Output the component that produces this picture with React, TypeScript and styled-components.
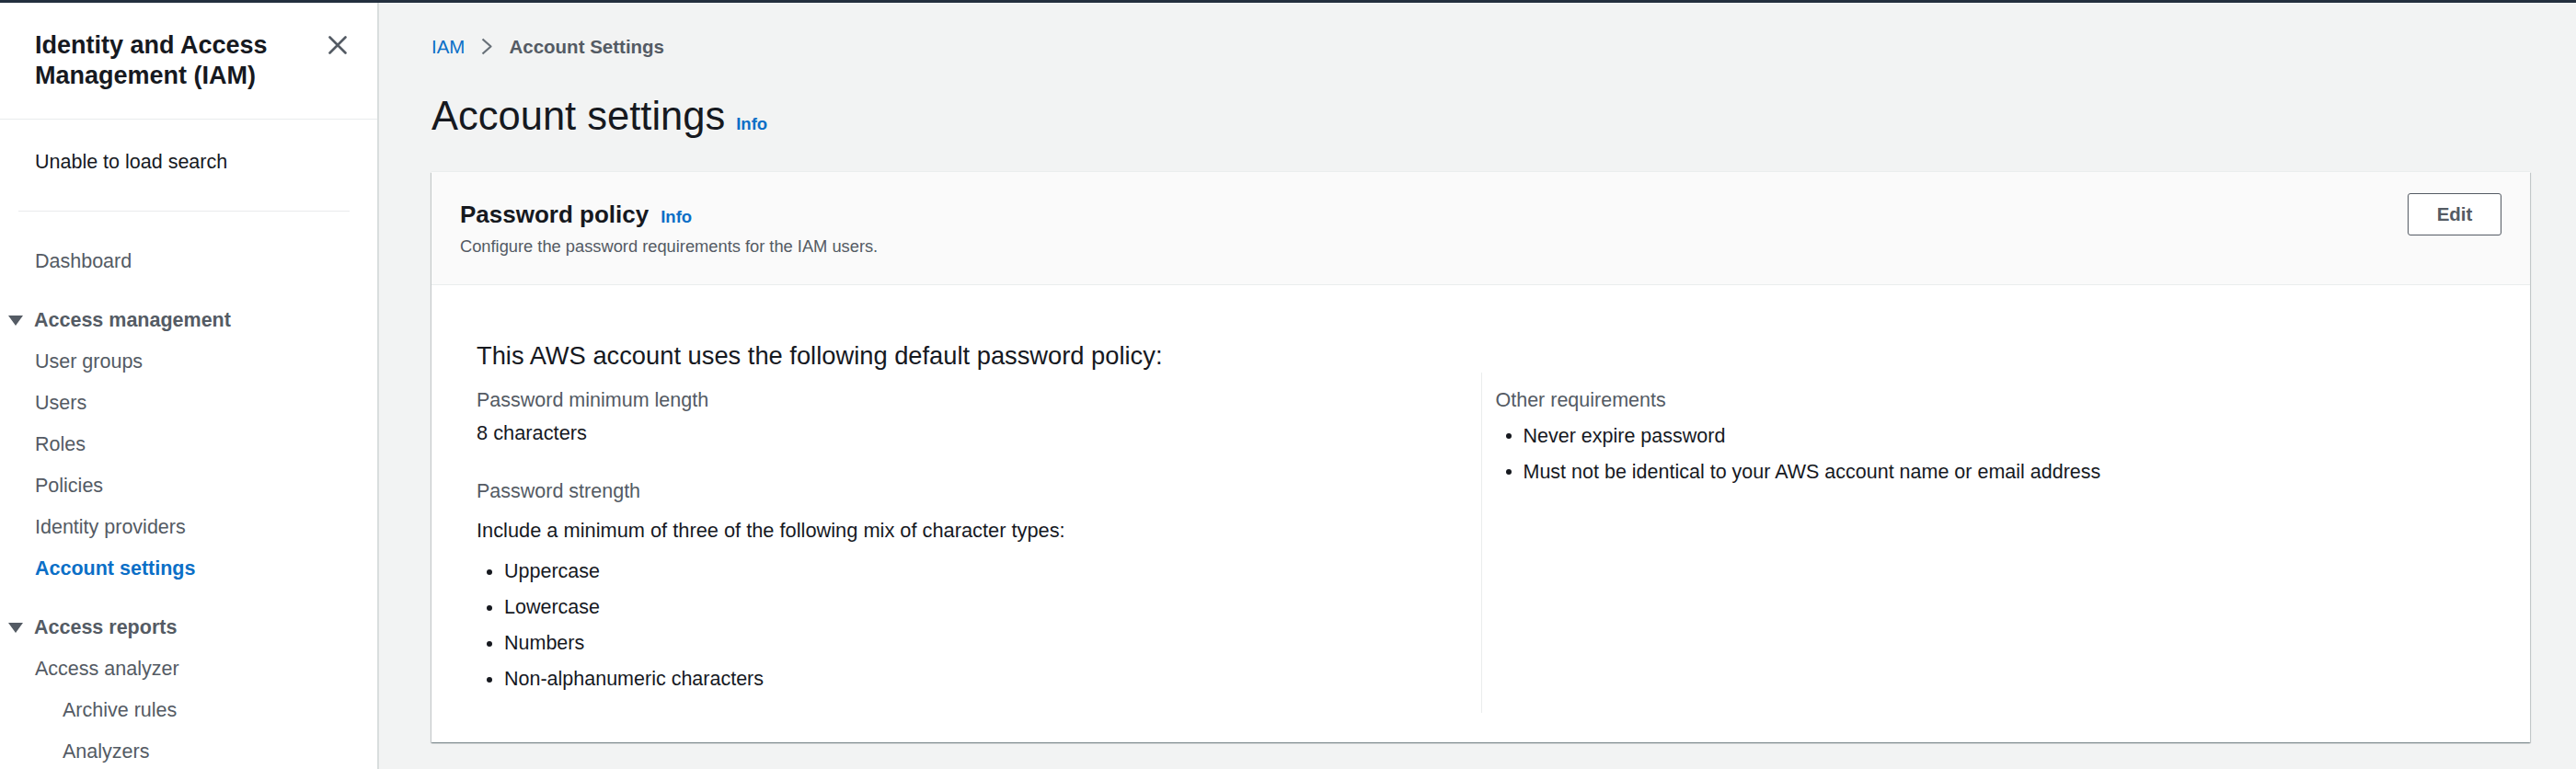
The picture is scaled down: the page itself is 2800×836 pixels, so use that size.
import React from 'react';
import styled, { createGlobalStyle } from 'styled-components';

const BLUE = '#0b6fc7';

const GlobalStyle = createGlobalStyle`
  html, body {
    margin: 0;
    padding: 0;
    background: #f2f3f3;
  }
  body {
    font-family: "Liberation Sans", Arial, sans-serif;
    color: #16191f;
  }
  * {
    box-sizing: border-box;
  }
`;

const TopBar = styled.div`
  height: 3px;
  background: #232f3e;
`;

const Shell = styled.div`
  display: flex;
  height: 833px;
`;

/* ---------- side navigation ---------- */

const Sidebar = styled.nav`
  width: 412px;
  flex: none;
  background: #fff;
  border-right: 2px solid #d9dede;
  overflow: hidden;
`;

const SideHeader = styled.div`
  display: flex;
  justify-content: space-between;
  align-items: flex-start;
  padding: 30px 33px 30px 38px;
  border-bottom: 1px solid #e9ebed;
`;

const SideTitle = styled.h2`
  margin: 0;
  max-width: 290px;
  font-size: 27px;
  line-height: 33px;
  font-weight: 700;
  color: #16191f;
`;

const CloseButton = styled.button`
  display: flex;
  padding: 0;
  margin-top: 6px;
  border: 0;
  background: none;
  color: #545b64;
  cursor: pointer;
`;

const SearchNote = styled.div`
  padding: 30px 0 37px 38px;
  font-size: 21.5px;
  line-height: 32px;
  color: #16191f;
`;

const SideDivider = styled.div`
  height: 1px;
  margin: 0 30px 0 20px;
  background: #e9ebed;
`;

const NavList = styled.ul`
  list-style: none;
  margin: 0;
  padding: 31.5px 0 0 0;
`;

const NavLink = styled.li<{ $active?: boolean; $nested?: boolean }>`
  padding-left: ${p => (p.$nested ? 68 : 38)}px;
  font-size: 21.5px;
  line-height: 45px;
  white-space: nowrap;
  color: ${p => (p.$active ? BLUE : '#545b64')};
  font-weight: ${p => (p.$active ? 700 : 400)};
`;

const SectionHeader = styled.li`
  display: flex;
  align-items: center;
  gap: 12px;
  margin-top: 19px;
  padding-left: 9px;
  font-size: 21.5px;
  line-height: 45px;
  font-weight: 700;
  color: #545b64;
`;

/* ---------- main content ---------- */

const Main = styled.main`
  flex: 1;
  min-width: 0;
  padding: 31.6px 50px 0 57px;
`;

const Breadcrumbs = styled.div`
  display: flex;
  align-items: center;
  gap: 18px;
  font-size: 20.5px;
  line-height: 32px;
`;

const Crumb = styled.span<{ $current?: boolean }>`
  color: ${p => (p.$current ? '#545b64' : BLUE)};
  font-weight: ${p => (p.$current ? 700 : 400)};
`;

const PageTitle = styled.div`
  display: flex;
  align-items: baseline;
  gap: 12px;
  margin-top: 34.5px;
`;

const H1 = styled.h1`
  margin: 0;
  font-size: 43.5px;
  line-height: 50px;
  font-weight: 400;
  color: #16191f;
`;

const InfoLink = styled.a`
  font-size: 18.5px;
  font-weight: 700;
  color: ${BLUE};
  text-decoration: none;
`;

const Card = styled.section`
  margin-top: 36px;
  background: #fff;
  box-shadow: 0 1px 1px 0 rgba(0, 28, 36, 0.3), 1px 1px 1px 0 rgba(0, 28, 36, 0.15),
    -1px 1px 1px 0 rgba(0, 28, 36, 0.15), 0 -1px 0 0 #eaeded;
`;

const CardHeader = styled.header`
  display: flex;
  justify-content: space-between;
  align-items: flex-start;
  padding: 23px 31px 28px 31px;
  background: #fafafa;
  border-bottom: 1px solid #eaeded;
`;

const HeaderText = styled.div`
  margin-top: 4.6px;
`;

const TitleRow = styled.div`
  display: flex;
  align-items: baseline;
  gap: 13px;
`;

const CardTitle = styled.h2`
  margin: 0;
  font-size: 26px;
  line-height: 36px;
  font-weight: 700;
  color: #16191f;
`;

const CardDescription = styled.p`
  margin: 4px 0 0;
  font-size: 18.3px;
  line-height: 26px;
  color: #545b64;
`;

const Button = styled.button`
  width: 102px;
  height: 46px;
  border: 1.5px solid #545b64;
  border-radius: 3px;
  background: #fff;
  font-family: inherit;
  font-size: 20.5px;
  font-weight: 700;
  color: #545b64;
  cursor: pointer;
`;

const CardBody = styled.div`
  padding: 59px 49px 32px 49px;
`;

const BodyHeading = styled.h3`
  margin: 0;
  font-size: 27.3px;
  line-height: 36px;
  font-weight: 400;
  color: #16191f;
`;

const Columns = styled.div`
  display: grid;
  grid-template-columns: 1fr 1fr;
`;

const Column = styled.div<{ $divided?: boolean }>`
  padding: 14px 15px 21px ${p => (p.$divided ? 15 : 0)}px;
  border-left: ${p => (p.$divided ? '1px solid #eaeded' : 'none')};
`;

const Label = styled.div<{ $gap?: number }>`
  margin-top: ${p => p.$gap ?? 0}px;
  font-size: 21.5px;
  line-height: 32px;
  color: #545b64;
`;

const Text = styled.div<{ $gap?: number }>`
  margin-top: ${p => p.$gap ?? 0}px;
  font-size: 21.8px;
  line-height: 32px;
  color: #16191f;
`;

const List = styled.ul<{ $gap: number }>`
  list-style: none;
  margin: ${p => p.$gap}px 0 0;
  padding: 0;
`;

const ListItem = styled.li`
  display: flex;
  align-items: center;
  font-size: 21.5px;
  line-height: 32px;
  color: #16191f;

  & + & {
    margin-top: 7px;
  }
`;

const Dot = styled.span`
  width: 6px;
  height: 6px;
  margin: 1px 13px 0 11px;
  border-radius: 50%;
  background: #16191f;
  flex: none;
`;

const CloseIcon = () => (
  <svg width="20" height="20" viewBox="0 0 20 20" fill="none">
    <path d="M1.5 1.5l17 17M18.5 1.5l-17 17" stroke="currentColor" strokeWidth="2.6" strokeLinecap="round" />
  </svg>
);

const CaretDown = () => (
  <svg width="16" height="11" viewBox="0 0 16 11">
    <path d="M0 0h16L8 11z" fill="#545b64" />
  </svg>
);

const Chevron = () => (
  <svg width="12" height="19" viewBox="0 0 12 19" fill="none">
    <path d="M1.5 1.5l9 8-9 8" stroke="#687078" strokeWidth="2.2" strokeLinejoin="round" />
  </svg>
);

const accessManagement = ['User groups', 'Users', 'Roles', 'Policies', 'Identity providers', 'Account settings'];
const characterTypes = ['Uppercase', 'Lowercase', 'Numbers', 'Non-alphanumeric characters'];
const otherRequirements = [
  'Never expire password',
  'Must not be identical to your AWS account name or email address',
];

export default function App() {
  return (
    <>
      <GlobalStyle />
      <TopBar />
      <Shell>
        <Sidebar>
          <SideHeader>
            <SideTitle>Identity and Access Management (IAM)</SideTitle>
            <CloseButton aria-label="Close">
              <CloseIcon />
            </CloseButton>
          </SideHeader>
          <SearchNote>Unable to load search</SearchNote>
          <SideDivider />
          <NavList>
            <NavLink>Dashboard</NavLink>
            <SectionHeader>
              <CaretDown />
              Access management
            </SectionHeader>
            {accessManagement.map(item => (
              <NavLink key={item} $active={item === 'Account settings'}>
                {item}
              </NavLink>
            ))}
            <SectionHeader>
              <CaretDown />
              Access reports
            </SectionHeader>
            <NavLink>Access analyzer</NavLink>
            <NavLink $nested>Archive rules</NavLink>
            <NavLink $nested>Analyzers</NavLink>
          </NavList>
        </Sidebar>

        <Main>
          <Breadcrumbs>
            <Crumb>IAM</Crumb>
            <Chevron />
            <Crumb $current>Account Settings</Crumb>
          </Breadcrumbs>

          <PageTitle>
            <H1>Account settings</H1>
            <InfoLink>Info</InfoLink>
          </PageTitle>

          <Card>
            <CardHeader>
              <HeaderText>
                <TitleRow>
                  <CardTitle>Password policy</CardTitle>
                  <InfoLink>Info</InfoLink>
                </TitleRow>
                <CardDescription>Configure the password requirements for the IAM users.</CardDescription>
              </HeaderText>
              <Button>Edit</Button>
            </CardHeader>

            <CardBody>
              <BodyHeading>This AWS account uses the following default password policy:</BodyHeading>
              <Columns>
                <Column>
                  <Label>Password minimum length</Label>
                  <Text $gap={4}>8 characters</Text>
                  <Label $gap={31}>Password strength</Label>
                  <Text $gap={11}>Include a minimum of three of the following mix of character types:</Text>
                  <List $gap={12.5}>
                    {characterTypes.map(t => (
                      <ListItem key={t}>
                        <Dot />
                        {t}
                      </ListItem>
                    ))}
                  </List>
                </Column>
                <Column $divided>
                  <Label>Other requirements</Label>
                  <List $gap={7}>
                    {otherRequirements.map(t => (
                      <ListItem key={t}>
                        <Dot />
                        {t}
                      </ListItem>
                    ))}
                  </List>
                </Column>
              </Columns>
            </CardBody>
          </Card>
        </Main>
      </Shell>
    </>
  );
}
